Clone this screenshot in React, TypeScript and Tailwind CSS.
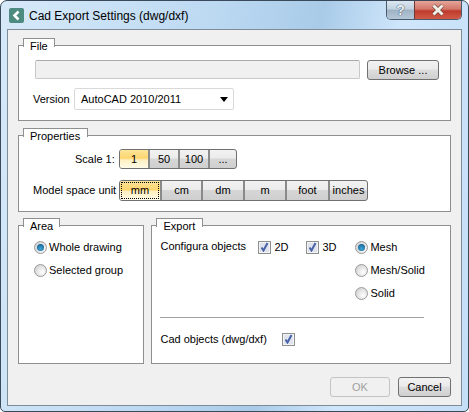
import { ReactNode } from 'react';

const font = "font-['Liberation_Sans',sans-serif]";

function Group({ title, tabWidth, className, children }: { title: string; tabWidth: string; className: string; children: ReactNode }) {
  return (
    <div className={`relative border border-[#8e8f8f] bg-white ${className}`}>
      {/* Tab sits over the box border */}
      <div className={`absolute left-1 -top-[8px] h-[9px] border border-b-0 border-[#8e8f8f] bg-white ${tabWidth}`}>
        <span className="absolute left-[6px] -top-[1px] text-[11px] leading-[16px] whitespace-nowrap text-black">{title}</span>
      </div>
      {children}
    </div>
  );
}

function Segmented({ items, widths }: { items: string[]; widths: string[] }) {
  return (
    <div className="flex h-full rounded-[3px] border border-[#707070] bg-[linear-gradient(#f2f2f2_0%,#ebebeb_45%,#d6d6d6_50%,#cfcfcf_100%)]">
      {items.map((item, i) => (
        <div
          key={item}
          className={`flex items-center justify-center text-[11px] text-black ${widths[i]} ${i > 0 ? 'border-l-2 border-[#8a8a8a]' : ''} ${
            i === 0 ? 'rounded-l-[2px] bg-[linear-gradient(#fde59a_0%,#fdd56f_45%,#fff0c0_55%,#fffbe8_100%)]' : ''
          }`}
        >
          {i === 0 && items[0] === 'mm' ? <span className="flex h-[calc(100%-2px)] w-[calc(100%-2px)] items-center justify-center border border-dotted border-black">{item}</span> : item}
        </div>
      ))}
    </div>
  );
}

function Radio({ label, checked }: { label: string; checked?: boolean }) {
  return (
    <div className="flex h-[23px] items-center">
      <span className="flex size-[13px] items-center justify-center rounded-full border border-[#9a9a9a] bg-[radial-gradient(circle_at_65%_65%,#ffffff,#c8c8c8)]">
        {checked && <span className="size-[7px] rounded-full bg-[radial-gradient(circle_at_50%_65%,#3fa7d6,#0b4f80)]" />}
      </span>
      <span className="ml-[2px] text-[11px] whitespace-nowrap text-black">{label}</span>
    </div>
  );
}

function Check() {
  return (
    <span className="flex size-[13px] items-center justify-center border border-[#8e8f8f] bg-[#dfe3ee] shadow-[inset_0_0_0_1px_#f4f4f4]">
      <svg width="9" height="10" viewBox="0 0 9 10" fill="none">
        <path d="M1.5 5.5 L3.5 8.5 L7.5 1" stroke="#4a62a8" strokeWidth="2" />
      </svg>
    </span>
  );
}

function CheckItem({ label, className }: { label: string; className: string }) {
  return (
    <div className={`flex items-center ${className}`}>
      <Check />
      <span className="ml-[3px] text-[11px] text-black">{label}</span>
    </div>
  );
}

function PushButton({ label, className, disabled }: { label: string; className: string; disabled?: boolean }) {
  return (
    <div
      className={`flex h-[20px] items-center justify-center rounded-[3px] border text-[11px] ${className} ${
        disabled
          ? 'border-[#c4c4c4] bg-[#f0f0f0] text-[#a0a0a0]'
          : 'border-[#707070] text-black bg-[linear-gradient(#f2f2f2_0%,#ebebeb_45%,#dddddd_50%,#cfcfcf_100%)]'
      }`}
    >
      {label}
    </div>
  );
}

export default function App() {
  return (
    <div className={`${font} flex h-[412px] w-[469px] flex-col rounded-t-[7px] rounded-b-[5px] border border-[#3a4a5a] bg-[linear-gradient(100deg,#d6e9f9_0%,#bcd9f2_40%,#a9cbe8_60%,#cfe6fb_75%,#c4def6_100%)]`}>
      {/* Title bar */}
      <div className="flex h-[28px] shrink-0 items-start">
        <span className="ml-[8px] mt-[7px] flex size-[15px] items-center justify-center rounded-[2px] bg-[#4d8a80]">
          <svg width="9" height="11" viewBox="0 0 9 11" fill="none">
            <path d="M6.5 1.5 L2.5 5.5 L6.5 9.5" stroke="white" strokeWidth="2.6" />
          </svg>
        </span>
        <span className="ml-[5px] mt-[7px] text-[12px] leading-[16px] text-black">Cad Export Settings (dwg/dxf)</span>
        {/* Caption buttons */}
        <div className="mr-[6px] ml-auto flex h-[19px] overflow-hidden rounded-b-[5px] border border-t-0 border-[#4a5a6a]">
          <div className="flex w-[27px] items-center justify-center bg-[linear-gradient(#dbe6f0_0%,#c2d2e0_45%,#9fb2c4_50%,#b4c8da_100%)] text-[14px] font-bold text-[#eef2f6] [text-shadow:0_0_1px_#33475a,0_0_1px_#33475a]">?</div>
          <div className="flex w-[47px] items-center justify-center border-l border-[#6b3a36] bg-[linear-gradient(#e3a598_0%,#d3776a_45%,#bf3a2c_55%,#d05a48_100%)]">
            <svg width="16" height="12" viewBox="0 0 16 12" fill="none">
              <path d="M3.5 1.5 L12.5 10.5 M12.5 1.5 L3.5 10.5" stroke="#5a3a36" strokeWidth="4" />
              <path d="M3.5 1.5 L12.5 10.5 M12.5 1.5 L3.5 10.5" stroke="#f4efe6" strokeWidth="3" />
            </svg>
          </div>
        </div>
      </div>

      {/* Client area */}
      <div className="mr-[6px] ml-[6px] flex h-[377px] flex-col border border-[#7f8b96] bg-[#f0f0f0] px-[10px] pt-[15px]">
        <Group title="File" tabWidth="w-[32px]" className="flex h-[76px] flex-col pl-[16px]">
          <div className="mt-[14px] flex items-start">
            <div className="h-[19px] w-[325px] rounded-[2px] border border-[#c8c8c8] border-t-[#aaaaaa] bg-[#f0f0f0]" />
            <PushButton label="Browse ..." className="ml-[7px] w-[72px]" />
          </div>
          <div className="mt-[8px] flex items-center">
            <span className="-ml-[2px] w-[41px] text-[11px] text-black">Version</span>
            <div className="flex h-[22px] w-[160px] items-center justify-between rounded-[2px] border border-[#d9d9d9] bg-white pr-[5px] pl-[6px] text-[11px] text-black">
              AutoCAD 2010/2011
              <span className="h-0 w-0 border-x-[4px] border-t-[5px] border-x-transparent border-t-black" />
            </div>
          </div>
        </Group>

        <Group title="Properties" tabWidth="w-[65px]" className="mt-[14px] h-[77px] pl-[14px]">
          <div className="mt-[13px] flex h-[20px] items-center">
            <span className="w-[86px] pl-[42px] text-[11px] whitespace-nowrap text-black">Scale 1:</span>
            <Segmented items={['1', '50', '100', '...']} widths={['w-[28px]', 'w-[30px]', 'w-[30px]', 'w-[28px]']} />
          </div>
          <div className="mt-[11px] flex h-[21px] items-center">
            <span className="w-[86px] text-[11px] whitespace-nowrap text-black">Model space unit</span>
            <Segmented items={['mm', 'cm', 'dm', 'm', 'foot', 'inches']} widths={['w-[40px]', 'w-[41px]', 'w-[42px]', 'w-[42px]', 'w-[43px]', 'w-[39px]']} />
          </div>
        </Group>

        <div className="mt-[13px] flex gap-[7px]">
          <Group title="Area" tabWidth="w-[37px]" className="h-[139px] w-[127px] pt-[10px] pl-[15px]">
            <Radio label="Whole drawing" checked />
            <Radio label="Selected group" />
          </Group>

          <Group title="Export" tabWidth="w-[47px]" className="flex h-[139px] w-[301px] flex-col px-[8px]">
            <div className="flex">
              <span className="mt-[12px] w-[98px] text-[11px] leading-[16px] whitespace-nowrap text-black">Configura objects</span>
              <CheckItem label="2D" className="mt-[11px] h-[20px] w-[48px]" />
              <CheckItem label="3D" className="mt-[11px] h-[20px] w-[49px]" />
              <div className="mt-[10px]">
                <Radio label="Mesh" checked />
                <Radio label="Mesh/Solid" />
                <Radio label="Solid" />
              </div>
            </div>
            <div className="mt-[12px] h-px w-[264px] bg-[#a0a0a0]" />
            <div className="mt-[13px] flex items-center">
              <span className="w-[122px] text-[11px] leading-[16px] whitespace-nowrap text-black">Cad objects (dwg/dxf)</span>
              <Check />
            </div>
          </Group>
        </div>

        <div className="mt-[13px] flex justify-end gap-[8px]">
          <PushButton label="OK" className="w-[60px]" disabled />
          <PushButton label="Cancel" className="w-[53px]" />
        </div>
      </div>
    </div>
  );
}
